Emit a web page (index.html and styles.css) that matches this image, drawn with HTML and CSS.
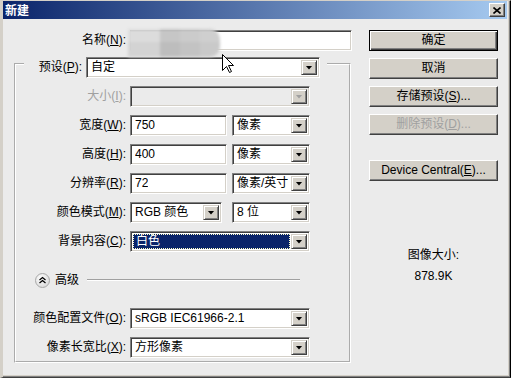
FILE: index.html
```html
<!DOCTYPE html>
<html>
<head>
<meta charset="utf-8">
<title>新建</title>
<link rel="stylesheet" href="styles.css">
</head>
<body>
<div class="window">
  <div class="titlebar">
    <span class="title">新建</span>
    <span class="close-btn"><svg width="8" height="7" viewBox="0 0 8 7"><path d="M0.5 0.5 L7.5 6.5 M7.5 0.5 L0.5 6.5" stroke="#000" stroke-width="1.6"/></svg></span>
  </div>
  <div class="content">
    <div class="leftcol">
      <div class="namerow">
        <span class="lbl namelbl">名称(<u>N</u>):</span>
        <div class="field namefield"></div>
      </div>
      <fieldset class="group">
        <legend class="legend">
          <div class="legend-inner">
            <span class="lbl presetlbl">预设(<u>P</u>):</span>
            <div class="combo preset"><span class="val">自定</span><span class="arrow"></span></div>
          </div>
        </legend>
        <div class="rows">
          <div class="row">
            <span class="lbl rowlbl dis">大小(<u>I</u>):</span>
            <div class="combo wide disabled"><span class="val"></span><span class="arrow"></span></div>
          </div>
          <div class="row">
            <span class="lbl rowlbl">宽度(<u>W</u>):</span>
            <div class="field num"><span class="val">750</span></div>
            <div class="combo unit"><span class="val">像素</span><span class="arrow"></span></div>
          </div>
          <div class="row">
            <span class="lbl rowlbl">高度(<u>H</u>):</span>
            <div class="field num"><span class="val">400</span></div>
            <div class="combo unit"><span class="val">像素</span><span class="arrow"></span></div>
          </div>
          <div class="row">
            <span class="lbl rowlbl">分辨率(<u>R</u>):</span>
            <div class="field num"><span class="val">72</span></div>
            <div class="combo unit"><span class="val">像素/英寸</span><span class="arrow"></span></div>
          </div>
          <div class="row">
            <span class="lbl rowlbl">颜色模式(<u>M</u>):</span>
            <div class="combo mode"><span class="val">RGB 颜色</span><span class="arrow"></span></div>
            <div class="combo unit bits"><span class="val">8 位</span><span class="arrow"></span></div>
          </div>
          <div class="row">
            <span class="lbl rowlbl">背景内容(<u>C</u>):</span>
            <div class="combo wide selected"><span class="val">白色</span><span class="arrow"></span></div>
          </div>
          <div class="advanced">
            <svg class="chev" width="15" height="15" viewBox="0 0 15 15">
              <defs>
                <radialGradient id="g" cx="0.4" cy="0.35" r="0.7">
                  <stop offset="0" stop-color="#ffffff"/>
                  <stop offset="1" stop-color="#d8d8d8"/>
                </radialGradient>
              </defs>
              <circle cx="7.5" cy="7.5" r="7" fill="url(#g)" stroke="#a8a8a8" stroke-width="1"/>
              <path d="M4.5 7 L7.5 4.5 L10.5 7 M4.5 10 L7.5 7.5 L10.5 10" fill="none" stroke="#000" stroke-width="1.3"/>
            </svg>
            <span class="advlbl">高级</span>
            <span class="advline"></span>
          </div>
          <div class="row gap-after">
            <span class="lbl rowlbl">颜色配置文件(<u>O</u>):</span>
            <div class="combo wide"><span class="val">sRGB IEC61966-2.1</span><span class="arrow"></span></div>
          </div>
          <div class="row">
            <span class="lbl rowlbl">像素长宽比(<u>X</u>):</span>
            <div class="combo wide"><span class="val">方形像素</span><span class="arrow"></span></div>
          </div>
        </div>
      </fieldset>
    </div>
    <div class="rightcol">
      <div class="btn default">确定</div>
      <div class="btn">取消</div>
      <div class="btn">存储预设(<u>S</u>)...</div>
      <div class="btn disabled-btn">删除预设(<u>D</u>)...</div>
      <div class="btn device">Device Central(<u>E</u>)...</div>
      <div class="sizeinfo">
        <div class="sizelbl">图像大小:</div>
        <div class="sizeval">878.9K</div>
      </div>
    </div>
  </div>
  <div class="blur">
    <span class="b b1"></span><span class="b b2"></span><span class="b b3"></span><span class="b b4"></span>
    <span class="b b5"></span><span class="b b6"></span><span class="b b7"></span><span class="b b8"></span>
  </div>
  <svg class="cursor" width="13" height="20" viewBox="0 0 13 20">
    <path d="M0.5 0.5 L0.5 16.5 L4.5 12.5 L7.5 18.5 L9.5 17.5 L6.5 11.5 L11.5 11.5 Z" fill="#fff" stroke="#000" stroke-width="1"/>
  </svg>
</div>
</body>
</html>
```

FILE: styles.css
```css
html, body {
  margin: 0;
  padding: 0;
  background: #ffffff;
}
body {
  font-family: "Liberation Sans", "Noto Sans CJK SC", sans-serif;
  font-size: 12px;
  color: #000;
}
u { text-decoration: underline; text-underline-offset: 1px; }

.window {
  position: relative;
  width: 511px;
  height: 378px;
  box-sizing: border-box;
  background: #ebebeb;
  border-style: solid;
  border-width: 1px 1px 1px 3px;
  border-color: #d4d0c8 #000 #404040 #d4d0c8;
  box-shadow: inset -1px -1px 0 #808080, inset -2px -2px 0 #d4d0c8;
  overflow: hidden;
}

.titlebar {
  height: 18px;
  margin-right: 3px;
  background: linear-gradient(to right, #0a246a, #a6caf0);
  display: flex;
  align-items: center;
  justify-content: space-between;
  padding-left: 2px;
  padding-right: 2px;
}
.title {
  color: #fff;
  font-weight: bold;
  font-size: 12px;
  line-height: 14px;
  font-family: "Noto Sans CJK SC", sans-serif;
}
.close-btn {
  width: 16px;
  height: 14px;
  box-sizing: border-box;
  background: #d4d0c8;
  border: 1px solid;
  border-color: #fff #404040 #404040 #fff;
  box-shadow: inset -1px -1px 0 #808080;
  display: flex;
  align-items: center;
  justify-content: center;
}
.close-btn svg { display: block; }

.content {
  display: flex;
  padding-top: 11px;
}
.leftcol {
  width: 349px;
  display: flex;
  flex-direction: column;
}
.rightcol {
  margin-left: 17px;
  width: 129px;
  display: flex;
  flex-direction: column;
  gap: 7px;
}

.lbl {
  line-height: 17px;
  white-space: nowrap;
}
.namerow {
  display: flex;
  align-items: center;
  gap: 4px;
}
.namelbl {
  width: 123px;
  text-align: right;
}
.field {
  box-sizing: border-box;
  height: 21px;
  background: #fff;
  border: 1px solid;
  border-color: #808080 #fff #fff #808080;
  box-shadow: inset 1px 1px 0 #404040, inset -1px -1px 0 #d4d0c8;
  display: flex;
  align-items: center;
  padding-left: 4px;
}
.namefield { width: 222px; }
.num { width: 97px; }
.val {
  line-height: 17px;
  white-space: nowrap;
  overflow: hidden;
}

.group {
  margin: -1px 0 0 11px;
  padding: 0 0 3px 0;
  width: 337px;
  box-sizing: border-box;
  min-width: 0;
  border: 2px groove #ffffff;
}
.legend {
  padding: 7px 7px 0 11px;
  margin-left: 8px;
}
.legend-inner {
  display: flex;
  align-items: center;
  gap: 4px;
}
.presetlbl {
  width: 47px;
  text-align: right;
}

.combo {
  box-sizing: border-box;
  height: 21px;
  background: #fff;
  border: 1px solid;
  border-color: #808080 #fff #fff #808080;
  box-shadow: inset 1px 1px 0 #404040, inset -1px -1px 0 #d4d0c8;
  display: flex;
  align-items: stretch;
  padding: 2px 2px 2px 2px;
}
.combo .val {
  flex: 1;
  padding-left: 2px;
  display: flex;
  align-items: center;
}
.combo .arrow {
  width: 16px;
  flex: none;
  box-sizing: border-box;
  background: #d4d0c8;
  border: 1px solid;
  border-color: #d4d0c8 #404040 #404040 #d4d0c8;
  box-shadow: inset 1px 1px 0 #fff, inset -1px -1px 0 #808080;
  display: flex;
  align-items: center;
  justify-content: center;
}
.combo .arrow::after {
  content: "";
  width: 7px;
  height: 4px;
  background: #000;
  clip-path: polygon(0 0, 100% 0, 50% 100%);
}
.preset { width: 234px; }
.wide { width: 180px; }
.unit { width: 78px; }
.mode { width: 92px; }
.bits { margin-left: 5px; }

.combo.disabled { background: #ebebeb; }
.combo.disabled .arrow::after { background: #a0a0a0; }
.combo.selected .val {
  background: #0a246a;
  color: #fff;
  outline: 1px dotted #ffffc8;
  outline-offset: -1px;
  margin-right: 1px;
  padding-left: 3px;
}

.rows {
  margin-top: 8px;
  display: flex;
  flex-direction: column;
  gap: 8px;
}
.row {
  display: flex;
  align-items: center;
  gap: 5px;
}
.rowlbl {
  width: 110px;
  margin-right: -1px;
  text-align: right;
}
.dis { color: #a0a0a0; }

.advanced {
  margin-top: 12px;
  height: 16px;
  display: flex;
  align-items: center;
  padding-left: 19px;
}
.chev { display: block; flex: none; }
.advlbl {
  margin-left: 5px;
  line-height: 16px;
}
.advline {
  margin-left: 8px;
  width: 213px;
  height: 0;
  border-top: 1px solid #a0a0a0;
  border-bottom: 1px solid #fff;
}
.gap-after { margin-top: 12px; }

.btn {
  box-sizing: border-box;
  height: 21px;
  background: #d4d0c8;
  border: 1px solid;
  border-color: #fff #404040 #404040 #fff;
  box-shadow: inset -1px -1px 0 #808080;
  display: flex;
  align-items: center;
  justify-content: center;
  line-height: 17px;
  white-space: nowrap;
}
.btn.default {
  border-color: #000;
  box-shadow: inset 1px 1px 0 #fff, inset -1px -1px 0 #404040, inset -2px -2px 0 #808080;
}
.disabled-btn { color: #a0a0a0; }
.device { margin-top: 18px; }

.sizeinfo {
  margin-top: 58px;
  display: flex;
  flex-direction: column;
  align-items: center;
  gap: 2px;
}
.sizelbl, .sizeval { line-height: 19px; }

.blur {
  position: absolute;
  left: 125px;
  top: 28px;
  width: 92px;
  height: 28px;
  display: grid;
  grid-template-columns: 32px 20px 20px 20px;
  grid-template-rows: 13px 15px;
  filter: blur(1.5px);
}
.b1 { background: #dcdcdc; }
.b2 { background: #c6c6c6; }
.b3 { background: #cbcbcb; }
.b4 { background: #cfcfcf; border-top-right-radius: 10px; }
.b5 { background: #d3d3d3; }
.b6 { background: #bdbdbd; }
.b7 { background: #c3c3c3; }
.b8 { background: #c9c9c9; border-bottom-right-radius: 10px; }

.cursor {
  position: absolute;
  left: 219px;
  top: 53px;
}
```
